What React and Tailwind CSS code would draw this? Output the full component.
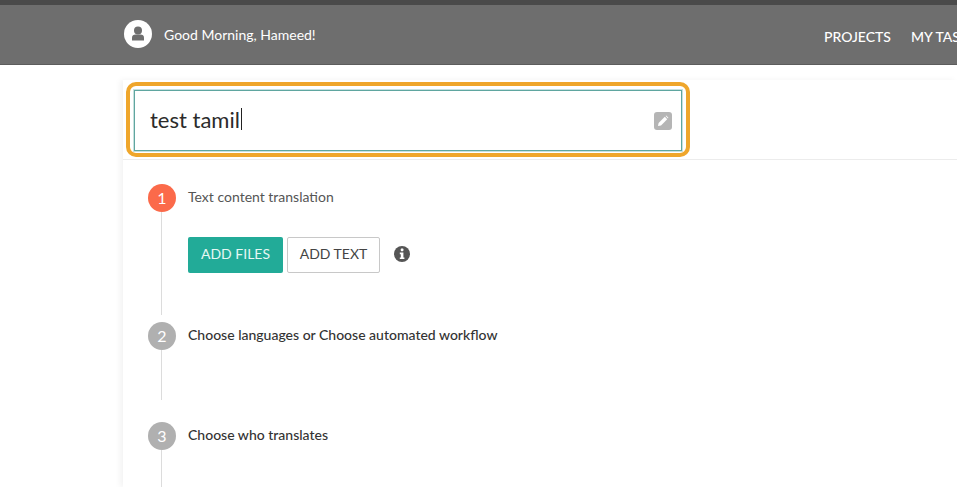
import React from 'react';

const Step = ({ num, title, active, lineClass, titleClass, children }) => (
  <div className="flex gap-3">
    <div className="flex flex-col w-7 shrink-0">
      <div className={`w-7 h-7 rounded-full flex items-center justify-center text-white text-[16px] pb-px shrink-0 ${active ? 'bg-[#fb6a4a]' : 'bg-[#b0b0b0]'}`}>
        {num}
      </div>
      <div className={`w-px ml-[13px] bg-[#dcdcdc] ${lineClass}`} />
    </div>
    <div className="flex-1">
      <div className={`h-7 flex items-center pb-1 text-[14px] ${titleClass}`}>{title}</div>
      {children}
    </div>
  </div>
);

export default function App() {
  return (
    <div className="h-[487px] w-[957px] overflow-hidden bg-white font-['Lato',sans-serif]">
      <div className="h-[5px] bg-[#4a4a4a]" />
      <header className="h-[60px] bg-[#6e6e6e] border-b border-[#5c5c5c] flex items-center pl-[124px] overflow-hidden">
        <div className="w-[700px] shrink-0 flex items-center gap-3 -mt-[1px]">
          <div className="w-7 h-7 rounded-full bg-white flex items-center justify-center">
            <svg width="16" height="18" viewBox="0 0 16 18">
              <circle cx="8" cy="5.5" r="4" fill="#6e6e6e" />
              <path d="M2 15.5V12.5C2 10.5 3.5 9.5 5.5 9.5H10.5C12.5 9.5 14 10.5 14 12.5V15.5Z" fill="#6e6e6e" />
            </svg>
          </div>
          <span className="text-white text-[14px]">Good Morning, Hameed!</span>
        </div>
        <nav className="flex gap-[20px] shrink-0 pt-[3px] text-white text-[14px] font-medium">
          <span>PROJECTS</span>
          <span>MY TASKS</span>
        </nav>
      </header>

      <main className="ml-[123px] mt-[15px] bg-white shadow-[-3px_0_6px_rgba(0,0,0,0.05)] h-[407px]">
        <div className="h-[80px] border-b border-[#ececec] pl-[3px] pt-[2px]">
          <div className="w-[564px] h-[75px] border-4 border-[#efa62b] rounded-[10px] px-1 pt-1 pb-[2px]">
            <div className="h-[61px] border border-[#5fa6a0] shadow-[0_0_0_1px_rgba(95,166,160,0.35)] flex items-center justify-between pl-[15px] pr-[9px]">
              <div className="flex items-center pb-[3px] text-[22px] text-[#2b2b2b]">
                test tamil<span className="w-px h-[22px] ml-px bg-[#222]" />
              </div>
              <div className="w-[18px] h-[18px] rounded-[3px] bg-[#b5b5b5] flex items-center justify-center">
                <svg width="12" height="12" viewBox="0 0 12 12" fill="#fff">
                  <path d="M1 11l.6-3L7.8 1.8l2.4 2.4L4 10.4z" />
                  <path d="M8.6 1l.6-.4 2.2 2.2-.4.6z" />
                </svg>
              </div>
            </div>
          </div>
        </div>

        <div className="pl-[25px] pt-[24px]">
          <Step num="1" active title="Text content translation" lineClass="h-[103px]" titleClass="text-[#555]">
            <div className="flex items-center mt-[25px]">
              <button className="w-[95px] h-9 pb-[3px] bg-[#22ab98] text-[#e6f7f4] text-[14px] rounded-[2px]">ADD FILES</button>
              <button className="w-[93px] h-9 pb-[3px] ml-1 bg-white border border-[#c8c8c8] text-[#444] text-[14px] rounded-[2px]">ADD TEXT</button>
              <svg className="ml-[14px] mb-[2px]" width="16" height="16" viewBox="0 0 16 16">
                <circle cx="8" cy="8" r="8" fill="#555" />
                <rect x="6.8" y="2.6" width="2.6" height="2.6" rx="0.6" fill="#fff" />
                <path d="M5.8 6.6H9.4V11.4H10.4V13H5.8V11.4H6.8V8.2H5.8Z" fill="#fff" />
              </svg>
            </div>
          </Step>
          <div className="mt-[7px]">
            <Step num="2" title="Choose languages or Choose automated workflow" lineClass="h-[50px]" titleClass="text-[#333] font-medium" />
          </div>
          <div className="mt-[22px]">
            <Step num="3" title="Choose who translates" lineClass="h-[40px]" titleClass="text-[#333] font-medium" />
          </div>
        </div>
      </main>
    </div>
  );
}
